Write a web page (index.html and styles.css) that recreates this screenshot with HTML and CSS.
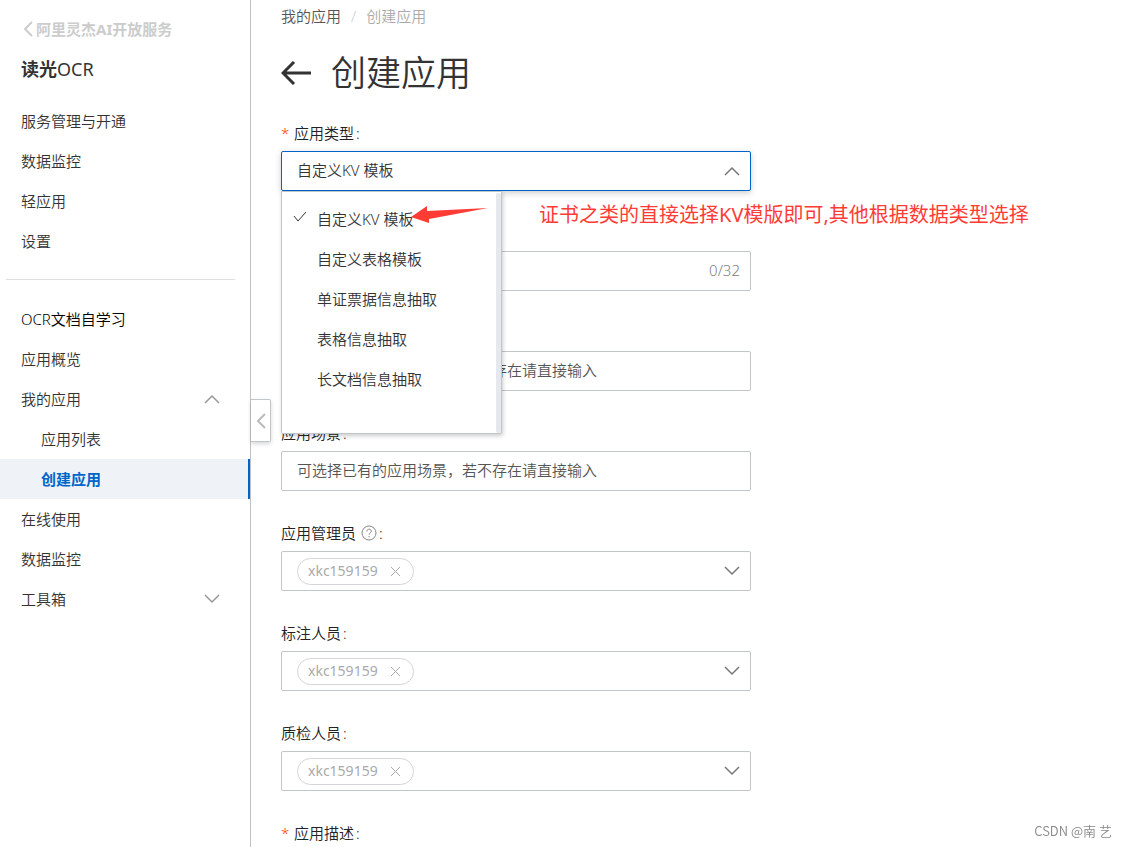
FILE: index.html
```html
<!DOCTYPE html>
<html lang="zh-CN">
<head>
<meta charset="utf-8">
<meta name="viewport" content="width=device-width, initial-scale=1">
<title>创建应用</title>
<link rel="stylesheet" href="styles.css">
</head>
<body>
<div class="layout">
  <aside class="sidebar">
    <a class="back-link" href="#">
      <svg class="back-icon" viewBox="0 0 10 16" aria-hidden="true"><path d="M9 1 2 8l7 7"/></svg>阿里灵杰AI开放服务</a>
    <div class="product">读光<span class="product-latin">OCR</span></div>
    <nav class="nav">
      <a class="nav-item" href="#">服务管理与开通</a>
      <a class="nav-item" href="#">数据监控</a>
      <a class="nav-item" href="#">轻应用</a>
      <a class="nav-item" href="#">设置</a>
    </nav>
    <hr class="divider">
    <nav class="nav">
      <a class="nav-item nav-heading" href="#">OCR文档自学习</a>
      <a class="nav-item" href="#">应用概览</a>
      <a class="nav-item" href="#">我的应用<svg class="chevron" viewBox="0 0 16 10" aria-hidden="true"><path d="M1 9l7-7 7 7"/></svg></a>
      <a class="nav-item nav-sub" href="#">应用列表</a>
      <a class="nav-item nav-sub nav-active" href="#">创建应用</a>
      <a class="nav-item" href="#">在线使用</a>
      <a class="nav-item" href="#">数据监控</a>
      <a class="nav-item" href="#">工具箱<svg class="chevron" viewBox="0 0 16 10" aria-hidden="true"><path d="M1 1l7 7 7-7"/></svg></a>
    </nav>
    <button class="collapse" type="button" aria-label="收起导航">
      <svg class="collapse-icon" viewBox="0 0 10 16" aria-hidden="true"><path d="M9 1 2 8l7 7"/></svg>
    </button>
  </aside>

  <main class="main">
    <nav class="breadcrumb"><a class="crumb" href="#">我的应用</a><span class="crumb-sep">/</span><span>创建应用</span></nav>
    <header class="page-head">
      <button class="return" type="button" aria-label="返回">
        <svg class="return-icon" viewBox="0 0 30 24" aria-hidden="true"><path d="M13 1 2 12l11 11M2 12h28"/></svg>
      </button>
      <h1 class="title">创建应用</h1>
    </header>

    <form class="form">
      <div class="field">
        <label class="label" for="type"><span class="required">*</span>应用类型<span class="colon">:</span></label>
        <div class="control control-open">
          <select class="select" id="type"><option>自定义KV 模板</option></select>
          <svg class="chevron control-chevron" viewBox="0 0 16 10" aria-hidden="true"><path d="M1 9l7-7 7 7"/></svg>
          <ul class="menu" role="listbox" aria-label="应用类型">
            <li class="option" role="option" aria-selected="true"><svg class="check" viewBox="0 0 14 12" aria-hidden="true"><path d="M1 5l4 5 8-9"/></svg>自定义KV 模板</li>
            <li class="option" role="option">自定义表格模板</li>
            <li class="option" role="option">单证票据信息抽取</li>
            <li class="option" role="option">表格信息抽取</li>
            <li class="option" role="option">长文档信息抽取</li>
          </ul>
          <svg class="arrow" viewBox="0 0 78 18" aria-hidden="true"><path d="M0 11 16 0v5L77 2 18 13v4z"/></svg>
          <p class="note">证书之类的直接选择KV模版即可,其他根据数据类型选择</p>
        </div>
      </div>
      <div class="field field-unlabelled">
        <div class="control"><input class="input" type="text" maxlength="32" aria-label="应用名称"><span class="counter">0/32</span></div>
      </div>
      <div class="field field-unlabelled">
        <div class="control"><input class="input" type="text" aria-label="应用行业" placeholder="可选择已有的应用行业，若不存在请直接输入"></div>
      </div>
      <div class="field">
        <label class="label" for="scene">应用场景<span class="colon">:</span></label>
        <div class="control"><input class="input" id="scene" type="text" placeholder="可选择已有的应用场景，若不存在请直接输入"></div>
      </div>
      <div class="field">
        <label class="label" for="admin">应用管理员<svg class="help" viewBox="0 0 16 16" aria-hidden="true"><circle cx="8" cy="8" r="7"/><path d="M5.800 6.500c0-3 4.500-3 4.500-.3 0 1.600-2.200 1.700-2.200 3.500M8.100 11v1.300"/></svg><span class="colon">:</span></label>
        <div class="control">
          <span class="tag">xkc159159<button class="tag-close" type="button" aria-label="移除"><svg class="close-icon" viewBox="0 0 11 11" aria-hidden="true"><path d="M1 1l9 9M10 1l-9 9"/></svg></button></span>
          <select class="select" id="admin"><option></option></select>
          <svg class="chevron control-chevron" viewBox="0 0 16 10" aria-hidden="true"><path d="M1 1l7 7 7-7"/></svg>
        </div>
      </div>
      <div class="field">
        <label class="label" for="annotator">标注人员<span class="colon">:</span></label>
        <div class="control">
          <span class="tag">xkc159159<button class="tag-close" type="button" aria-label="移除"><svg class="close-icon" viewBox="0 0 11 11" aria-hidden="true"><path d="M1 1l9 9M10 1l-9 9"/></svg></button></span>
          <select class="select" id="annotator"><option></option></select>
          <svg class="chevron control-chevron" viewBox="0 0 16 10" aria-hidden="true"><path d="M1 1l7 7 7-7"/></svg>
        </div>
      </div>
      <div class="field">
        <label class="label" for="inspector">质检人员<span class="colon">:</span></label>
        <div class="control">
          <span class="tag">xkc159159<button class="tag-close" type="button" aria-label="移除"><svg class="close-icon" viewBox="0 0 11 11" aria-hidden="true"><path d="M1 1l9 9M10 1l-9 9"/></svg></button></span>
          <select class="select" id="inspector"><option></option></select>
          <svg class="chevron control-chevron" viewBox="0 0 16 10" aria-hidden="true"><path d="M1 1l7 7 7-7"/></svg>
        </div>
      </div>
      <div class="label"><span class="required">*</span>应用描述<span class="colon">:</span></div>
    </form>
  </main>
</div>
<div class="watermark">CSDN @南 艺</div>
</body>
</html>
```

FILE: styles.css
```css
* {
  box-sizing: border-box;
}

body {
  margin: 0;
  background: #fff;
  color: #333;
  font: 15px/20px "Noto Sans", "Noto Sans CJK SC", sans-serif;
  font-weight: 350;
}

a {
  color: inherit;
  text-decoration: none;
}

button,
input,
select {
  margin: 0;
  padding: 0;
  border: 0;
  outline: 0;
  background: none;
  color: inherit;
  font: inherit;
}

svg {
  flex: none;
  fill: none;
  stroke: currentColor;
}

.layout {
  display: flex;
  min-height: 100vh;
}

/* Sidebar */
.sidebar {
  position: relative;
  flex: none;
  width: 251px;
  padding-top: 19px;
  border-right: 1px solid #c0c1c9;
}

.back-link {
  display: flex;
  align-items: center;
  gap: 3px;
  padding-left: 23px;
  color: #ccc;
  font-weight: 700;
}

.back-icon {
  width: 10px;
  height: 16px;
  stroke-width: 2;
}

.product {
  padding: 20px 21px 22px;
  font-size: 18px;
  font-weight: 700;
}

.product-latin {
  font-weight: 400;
}

.nav-item {
  display: flex;
  align-items: center;
  justify-content: space-between;
  height: 40px;
  padding: 0 30px 0 21px;
}

.nav-heading {
  color: #000;
}

.nav-sub {
  padding-left: 41px;
}

.nav-active {
  border-right: 2px solid #0064c8;
  background: #eff3f8;
  color: #0064c8;
  font-weight: 700;
}

.chevron {
  width: 16px;
  height: 10px;
  color: #999;
  stroke-width: 1.5;
}

.divider {
  height: 1px;
  margin: 18px 15px 19px 6px;
  border: 0;
  background: #dedede;
}

.collapse {
  position: absolute;
  top: 399px;
  left: calc(100% + 1px);
  display: flex;
  align-items: center;
  justify-content: center;
  width: 20px;
  height: 43px;
  border: 1px solid #c0c6cc;
  border-left: 0;
  border-radius: 0 2px 2px 0;
  background: #fff;
  box-shadow: 0 2px 4px rgba(0, 0, 0, .16);
  color: #bbb;
}

.collapse-icon {
  width: 10px;
  height: 16px;
  stroke-width: 2;
}

/* Page content */
.main {
  flex: 1;
  min-width: 0;
  padding: 6px 30px 0;
}

.breadcrumb {
  display: flex;
  gap: 10px;
  color: #aaa;
}

.crumb {
  color: #555;
}

.crumb-sep {
  color: #ccc;
}

.page-head {
  display: flex;
  align-items: center;
  gap: 20px;
  height: 91px;
  padding-top: 3px;
}

.return {
  display: flex;
}

.return-icon {
  width: 30px;
  height: 24px;
  stroke-width: 3;
}

.title {
  margin: 0;
  font-size: 35px;
  font-weight: 350;
  line-height: 48px;
}

.form {
  max-width: 470px;
}

.field {
  margin-bottom: 26px;
}

.field-unlabelled {
  padding-top: 34px;
}

.label {
  display: flex;
  align-items: center;
  height: 34px;
  padding-bottom: 2px;
  color: #222;
}

.colon {
  padding-left: 2px;
}

.required {
  width: 13px;
  color: #f30;
}

.help {
  width: 16px;
  height: 16px;
  margin-left: 5px;
  color: #888;
}

.control {
  position: relative;
  display: flex;
  align-items: center;
  height: 40px;
  padding: 0 10px 0 15px;
  border: 1px solid #c0c6cc;
  border-radius: 2px;
}

.control-open {
  border-color: #0064c8;
  box-shadow: 0 2px 6px rgba(0, 0, 0, .2);
}

.select,
.input {
  flex: 1;
  min-width: 0;
  height: 38px;
  padding-bottom: 2px;
  appearance: none;
}

.input::placeholder {
  color: #555;
  opacity: 1;
}

.control-chevron {
  color: #777;
}

.counter {
  padding-bottom: 2px;
  color: #808080;
}

.tag {
  display: flex;
  align-items: center;
  gap: 12px;
  height: 27px;
  padding: 0 12px 0 10px;
  border: 1px solid #d4d5da;
  border-radius: 14px;
  color: #aaa;
  font-size: 14px;
  font-weight: 400;
}

.tag-close {
  display: flex;
}

.close-icon {
  width: 11px;
  height: 11px;
}

/* Expanded list of application types */
.menu {
  position: absolute;
  z-index: 2;
  top: 39px;
  left: -1px;
  width: 221px;
  margin: 0;
  padding: 7px 0 34px;
  border: 1px solid #c0c6cc;
  border-radius: 0 0 2px 2px;
  background: #fff;
  box-shadow: 1px 2px 4px rgba(0, 0, 0, .2);
  list-style: none;
}

.menu::after {
  content: "";
  position: absolute;
  top: 1px;
  right: 0;
  bottom: 0;
  width: 5px;
  border-radius: 2px;
  background: #e5e9ed;
}

.option {
  position: relative;
  height: 40px;
  padding-left: 35px;
  line-height: 40px;
}

.check {
  position: absolute;
  top: 12px;
  left: 11px;
  width: 14px;
  height: 12px;
  stroke-width: 1;
}

/* Callout over the form */
.arrow {
  position: absolute;
  z-index: 3;
  top: 54px;
  left: 129px;
  width: 78px;
  height: 18px;
  fill: #ff3b36;
  stroke: none;
}

.note {
  position: absolute;
  z-index: 3;
  top: 51px;
  left: 257px;
  margin: 0;
  color: #ff3b36;
  font-size: 20px;
  font-weight: 400;
  line-height: 24px;
  white-space: nowrap;
}

.watermark {
  position: fixed;
  right: 15px;
  bottom: 6px;
  color: #888;
  font-family: "Noto Sans CJK SC", sans-serif;
  font-size: 13px;
}
```
